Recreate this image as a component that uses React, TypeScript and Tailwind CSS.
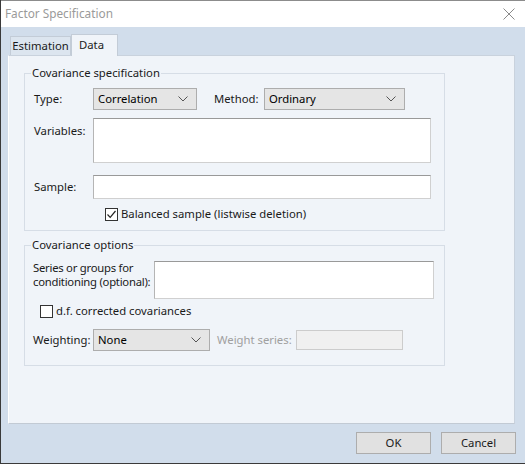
import {useState} from "react";

const font = {fontFamily: "\"Noto Sans\", \"Open Sans\", sans-serif"};

function Chevron() {
	return (
		<svg width="10" height="6" viewBox="0 0 10 6" className="shrink-0">
			<path d="M0.5 0.5 L5 5 L9.5 0.5" fill="none" stroke="#555" strokeWidth="1"/>
		</svg>
	);
}

function Select({value, width}: { value: string; width: string }) {
	return (
		<div className={`${width} h-[22px] flex items-center justify-between pl-[4px] pr-[8px] bg-[#e5e5e5] border border-[#adadad] text-[#000]`}>
			<span>{value}</span>
			<Chevron/>
		</div>
	);
}

function Check({checked, onClick}: { checked: boolean; onClick: () => void }) {
	return (
		<button onClick={onClick} className="w-[13px] h-[13px] bg-white border border-[#333] flex items-center justify-center shrink-0">
			{checked && (
				<svg width="11" height="11" viewBox="0 0 11 11">
					<path d="M1.5 5.5 L4.2 8.3 L9.5 2" fill="none" stroke="#222" strokeWidth="1.2"/>
				</svg>
			)}
		</button>
	);
}

export default function App() {
	const [balanced, setBalanced] = useState(true);
	const [dfCorrected, setDfCorrected] = useState(false);

	return (
		<div style={font} className="w-[525px] h-[464px] flex flex-col bg-[#d1ddeb] border-l border-b border-[#3a3a3a] text-[11.3px] text-[#1a1a1a] overflow-hidden whitespace-nowrap">
			{/* title bar */}
			<div className="h-[27px] bg-white border-t border-[#8c8c8c] flex items-center justify-between pl-[4px] pr-[10px] shrink-0">
				<span className="text-[#9a9a9a] text-[11.8px]">Factor Specification</span>
				<svg width="12" height="12" viewBox="0 0 12 12">
					<path d="M0.5 0.5 L11.5 11.5 M11.5 0.5 L0.5 11.5" stroke="#8a8a8a" strokeWidth="1"/>
				</svg>
			</div>

			<div className="flex flex-col pl-[7px] pr-[10px] flex-1">
				{/* tabs */}
				<div className="flex items-end h-[28px] pl-[2px] shrink-0">
					<div className="h-[19px] w-[61px] flex items-center justify-center bg-[#dce5ef] border border-b-0 border-[#c3ccd7] text-[#1a1a1a]">Estimation</div>
					<div className="h-[22px] w-[47px] -mb-[1px] relative z-10 flex items-center pl-[7px] bg-[#f0f4f9] border border-b-0 border-[#c3ccd7]">Data</div>
				</div>

				{/* panel */}
				<div className="h-[369px] bg-[#f0f4f9] border border-[#c9d2dd] border-l-white border-b-[#c2cad4] pl-[15px] pt-[9px] shrink-0">
					<fieldset className="w-[421px] h-[166px] border border-[#d6dde6]">
						<legend className="ml-[6px] px-[1px] leading-[16px]">Covariance specification</legend>
						<div className="pl-[9px] pt-[7px]">
							<div className="flex items-center h-[22px]">
								<span className="w-[59px]">Type:</span>
								<Select value="Correlation" width="w-[104px]"/>
								<span className="ml-[17px] w-[50px]">Method:</span>
								<Select value="Ordinary" width="w-[141px]"/>
							</div>
							<div className="flex mt-[8px]">
								<span className="w-[59px] pt-[5px]">Variables:</span>
								<textarea className="w-[338px] h-[45px] bg-white border border-[#d0d0d0] border-t-[#999] border-l-[#b5b5b5] resize-none outline-none"/>
							</div>
							<div className="flex items-center mt-[12px]">
								<span className="w-[59px]">Sample:</span>
								<input className="w-[338px] h-[24px] bg-white border border-[#d0d0d0] border-t-[#999] border-l-[#b5b5b5] outline-none"/>
							</div>
							<div className="flex items-center mt-[7px] ml-[71px] gap-[3px] h-[16px]">
								<Check checked={balanced} onClick={() => setBalanced(!balanced)}/>
								<span>Balanced sample (listwise deletion)</span>
							</div>
						</div>
					</fieldset>

					<fieldset className="w-[421px] h-[129px] mt-[6px] border border-[#d6dde6]">
						<legend className="ml-[6px] px-[1px] leading-[16px]">Covariance options</legend>
						<div className="pl-[8px] pt-[8px]">
							<div className="flex">
								<span className="w-[121px] leading-[14px] tracking-[-0.25px]">Series or groups for<br/>conditioning (optional):</span>
								<input className="w-[280px] h-[38px] bg-white border border-[#d0d0d0] border-t-[#999] border-l-[#b5b5b5] outline-none"/>
							</div>
							<div className="flex items-center mt-[4px] ml-[7px] gap-[3px] h-[16px]">
								<Check checked={dfCorrected} onClick={() => setDfCorrected(!dfCorrected)}/>
								<span>d.f. corrected covariances</span>
							</div>
							<div className="flex items-center mt-[10px]">
								<span className="w-[60px]">Weighting:</span>
								<Select value="None" width="w-[117px]"/>
								<span className="ml-[7px] w-[79px] text-[#a0a0a0]">Weight series:</span>
								<input disabled className="w-[107px] h-[20px] bg-[#f0f0f0] border border-[#cccccc]"/>
							</div>
						</div>
					</fieldset>
				</div>

				{/* buttons */}
				<div className="flex justify-end gap-[10px] mt-[8px] -mr-[1px]">
					<button className="w-[75px] h-[22px] bg-[#e1e1e1] border border-[#adadad]">OK</button>
					<button className="w-[75px] h-[22px] bg-[#e1e1e1] border border-[#adadad]">Cancel</button>
				</div>
			</div>
		</div>
	);
}
